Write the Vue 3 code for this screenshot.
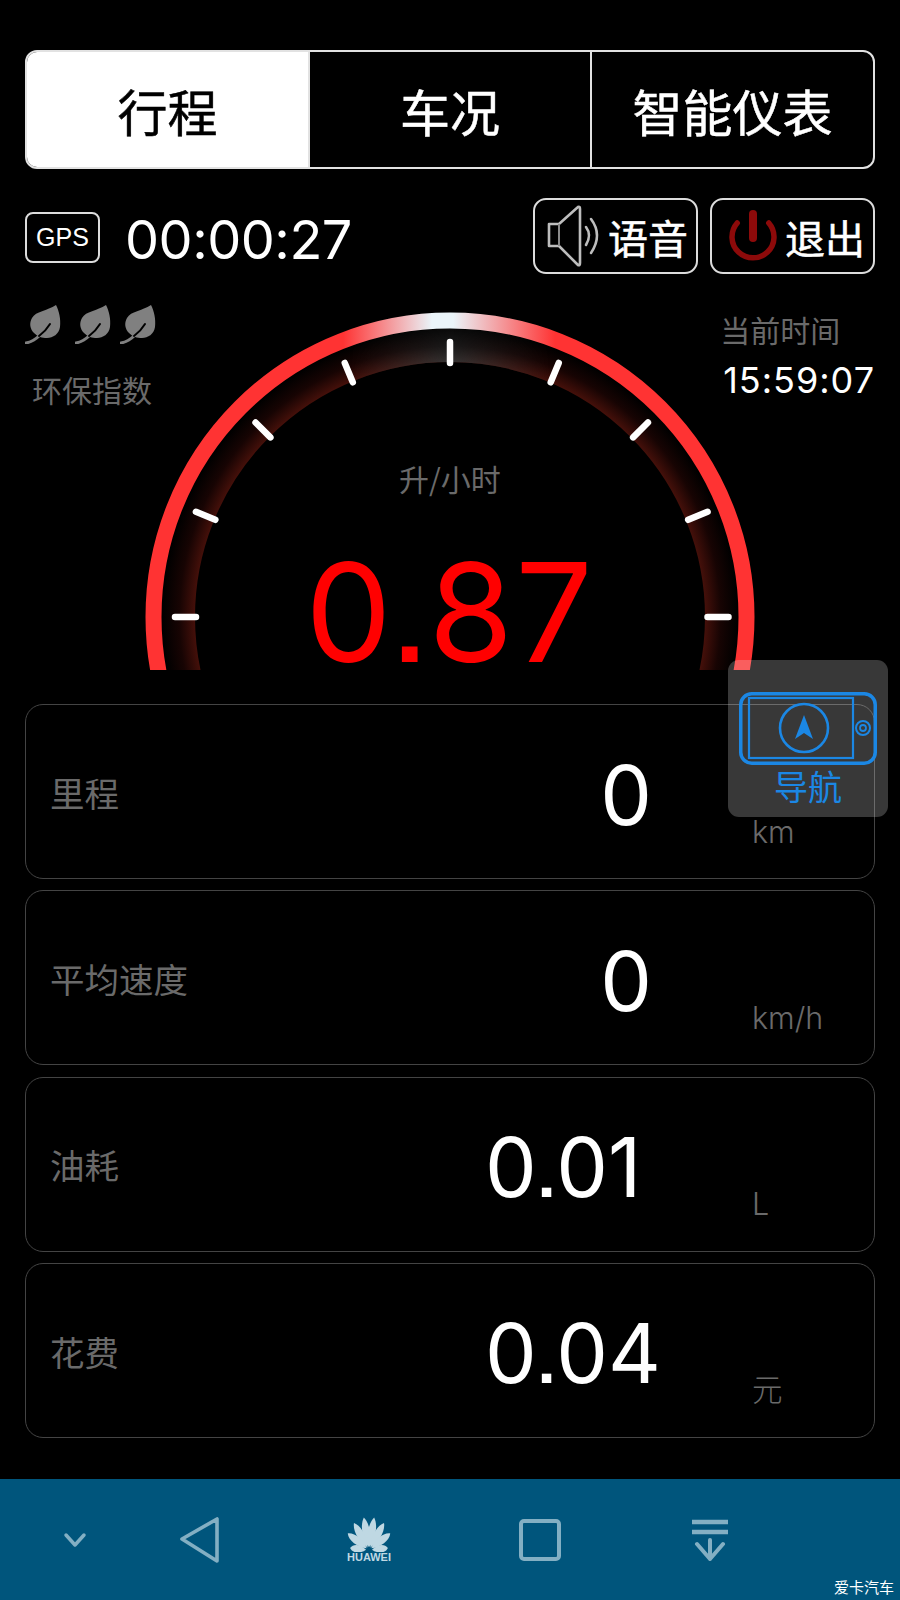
<script setup>
const tabs = [
  { name: '行程', active: true },
  { name: '车况', active: false },
  { name: '智能仪表', active: false }
]
const cx = 450
const cy = 617
const ticks = [0, 22.5, 45, 67.5, 90, 112.5, 135, 157.5, 180].map((deg) => {
  const a = (deg * Math.PI) / 180
  const shift = deg > 90 ? 3.5 : 0
  return {
    x1: cx + shift - 254 * Math.cos(a),
    y1: cy - 254 * Math.sin(a),
    x2: cx + shift - 275 * Math.cos(a),
    y2: cy - 275 * Math.sin(a)
  }
})
const petals = [
  { a: -9, l: 33 }, { a: 9, l: 33 },
  { a: -29, l: 31 }, { a: 29, l: 31 },
  { a: -52, l: 27 }, { a: 52, l: 27 },
  { a: -84, l: 19 }, { a: 84, l: 19 }
]
const rows = [
  { label: '里程', value: '0', unit: 'km' },
  { label: '平均速度', value: '0', unit: 'km/h' },
  { label: '油耗', value: '0.01', unit: 'L' },
  { label: '花费', value: '0.04', unit: '元' }
]
</script>

<template>
  <div class="page">
    <main class="content">
      <nav class="tabs">
        <div v-for="t in tabs" :key="t.name" class="tab" :class="{ active: t.active }">{{ t.name }}</div>
      </nav>

      <section class="status">
        <div class="gps">GPS</div>
        <div class="elapsed">00:00:27</div>
        <div class="actions">
          <div class="action">
            <svg class="ic-speaker" viewBox="0 0 60 64" width="60" height="64">
              <path d="M2 20H12L31 3Q33 2 33 5V59Q33 62 31 61L12 42H2Z" fill="none" stroke="#bdbdbd" stroke-width="2.6" stroke-linejoin="round" />
              <path d="M12 20V42" stroke="#8a8a8a" stroke-width="2" />
              <path d="M39 23Q45 31 39 41" fill="none" stroke="#bdbdbd" stroke-width="2.6" stroke-linecap="round" />
              <path d="M44 15Q56 31 44 49" fill="none" stroke="#bdbdbd" stroke-width="2.6" stroke-linecap="round" />
            </svg>
            <span>语音</span>
          </div>
          <div class="action">
            <svg class="ic-power" viewBox="0 0 50 56" width="50" height="56">
              <path d="M9.200 15A21 21 0 1 0 40.800 15" fill="none" stroke="#8d0a0a" stroke-width="5.500" stroke-linecap="round" />
              <path d="M25 6V30" stroke="#8d0a0a" stroke-width="8" stroke-linecap="round" />
            </svg>
            <span>退出</span>
          </div>
        </div>
      </section>

      <section class="gauge">
        <svg class="dial" viewBox="0 274 900 396" width="900" height="396">
          <defs>
            <linearGradient id="rim" gradientUnits="userSpaceOnUse" x1="343" y1="0" x2="555" y2="0">
              <stop offset="0" stop-color="#ff3333" />
              <stop offset="0.42" stop-color="#eaf4f9" />
              <stop offset="0.52" stop-color="#eaf4f9" />
              <stop offset="1" stop-color="#ff3333" />
            </linearGradient>
            <radialGradient id="bandRed" gradientUnits="userSpaceOnUse" cx="450" cy="617" r="288">
              <stop offset="0.885" stop-color="#45100a" />
              <stop offset="0.94" stop-color="#170403" />
              <stop offset="1" stop-color="#000" />
            </radialGradient>
            <radialGradient id="bandGrey" gradientUnits="userSpaceOnUse" cx="450" cy="617" r="288">
              <stop offset="0.885" stop-color="#333" />
              <stop offset="0.94" stop-color="#1a1a1a" />
              <stop offset="1" stop-color="#0a0a0a" />
            </radialGradient>
            <linearGradient id="topFade" gradientUnits="userSpaceOnUse" x1="350" y1="0" x2="550" y2="0">
              <stop offset="0" stop-color="#000" />
              <stop offset="0.5" stop-color="#fff" />
              <stop offset="1" stop-color="#000" />
            </linearGradient>
            <mask id="topMask" maskUnits="userSpaceOnUse" x="0" y="274" width="900" height="396">
              <rect x="0" y="274" width="900" height="396" fill="url(#topFade)" />
            </mask>
          </defs>
          <circle cx="450" cy="617" r="271.500" fill="none" stroke="url(#bandRed)" stroke-width="33" />
          <circle cx="450" cy="617" r="271.500" fill="none" stroke="url(#bandGrey)" stroke-width="33" mask="url(#topMask)" />
          <circle cx="450" cy="617" r="296.500" fill="none" stroke="url(#rim)" stroke-width="16" />
          <line v-for="(t, i) in ticks" :key="i" :x1="t.x1" :y1="t.y1" :x2="t.x2" :y2="t.y2" stroke="#fff" stroke-width="6.500" stroke-linecap="round" />
        </svg>

        <div class="eco">
          <div class="leaves">
            <svg v-for="n in 3" :key="n" class="leaf" viewBox="0 0 36 39" width="36" height="39">
              <path d="M31 0C34 6 36 14 35 22C34 29 28 33 22 33C17 33 13 32 9 28C5 24 4 18 7 13C11 6 22 6 31 0Z" fill="#808080" />
              <path d="M1 38C6 37 10 35 14 31" fill="none" stroke="#808080" stroke-width="3" stroke-linecap="round" />
              <path d="M14 31C18 28 22 24 25 19" fill="none" stroke="#000" stroke-width="2" stroke-linecap="round" />
            </svg>
          </div>
          <div class="muted-label eco-label">环保指数</div>
        </div>

        <div class="reading">
          <div class="muted-label reading-unit">升/小时</div>
          <div class="reading-value">0.87</div>
        </div>

        <div class="clock">
          <div class="muted-label">当前时间</div>
          <div class="clock-time">15:59:07</div>
        </div>
      </section>

      <section class="cards">
        <div v-for="r in rows" :key="r.label" class="card">
          <div class="card-label">{{ r.label }}</div>
          <div class="card-value" :class="{ single: r.value.length === 1 }">{{ r.value }}</div>
          <div class="card-unit">{{ r.unit }}</div>
        </div>
      </section>
    </main>

    <footer class="navbar">
      <svg class="nav-chevron" viewBox="0 0 24 16" width="24" height="16">
        <path d="M3 3L12 13L21 3" fill="none" stroke="#83afc3" stroke-width="3.500" stroke-linecap="round" stroke-linejoin="round" />
      </svg>
      <svg class="nav-back" viewBox="0 0 40 46" width="40" height="46">
        <path d="M37 2V44L2 22Z" fill="none" stroke="#83afc3" stroke-width="3.600" stroke-linejoin="round" />
      </svg>
      <div class="huawei">
        <svg viewBox="-23 -34 46 36" width="46" height="36">
          <path v-for="p in petals" :key="p.a" :transform="`rotate(${p.a}) translate(0 -3)`" :d="`M0 0C-5 -${p.l * 0.3} -5 -${p.l * 0.7} 0 -${p.l - 3}C5 -${p.l * 0.7} 5 -${p.l * 0.3} 0 0Z`" fill="#bfd8e3" />
        </svg>
        <span>HUAWEI</span>
      </div>
      <svg class="nav-home" viewBox="0 0 44 44" width="44" height="44">
        <rect x="3" y="3" width="38" height="38" rx="3" fill="none" stroke="#83afc3" stroke-width="4" />
      </svg>
      <svg class="nav-down" viewBox="0 0 36 42" width="36" height="42">
        <path d="M0 3H36M0 13H36" stroke="#83afc3" stroke-width="4.500" />
        <path d="M18 21V40M5 25L18 40L31 25" fill="none" stroke="#83afc3" stroke-width="4" stroke-linejoin="round" stroke-linecap="round" />
      </svg>
    </footer>

    <aside class="float-nav">
      <svg class="float-icon" viewBox="0 0 142 76" width="142" height="76">
        <rect x="3.750" y="2.750" width="134.500" height="69.500" rx="11" fill="none" stroke="#1b87e4" stroke-width="3.500" />
        <rect x="12" y="7" width="104" height="60" fill="none" stroke="#1b87e4" stroke-width="2.200" />
        <circle cx="67" cy="37" r="24" fill="none" stroke="#1b87e4" stroke-width="2.600" />
        <path d="M67 24L76 48L67 42L58 48Z" fill="#1b87e4" />
        <circle cx="126" cy="37" r="7" fill="none" stroke="#1b87e4" stroke-width="2" />
        <circle cx="126" cy="37" r="3" fill="none" stroke="#1b87e4" stroke-width="1.800" />
      </svg>
      <div class="float-label">导航</div>
    </aside>

    <div class="watermark">爱卡汽车</div>
  </div>
</template>

<style scoped>
.page {
  position: relative;
  width: 900px;
  height: 1600px;
  overflow: hidden;
  background: #000;
  color: #fff;
  display: flex;
  flex-direction: column;
  font-family: "Noto Sans CJK SC", "Liberation Sans", sans-serif;
}
.content {
  flex: 1;
  padding: 50px 25px 0 25px;
}
.tabs {
  display: grid;
  grid-template-columns: 281px 282px 1fr;
  height: 119px;
  border: 2px solid #e2e2e2;
  border-radius: 12px;
  overflow: hidden;
  box-sizing: border-box;
}
.tab {
  display: flex;
  align-items: center;
  justify-content: center;
  font-size: 50px;
  -webkit-text-stroke: 0.5px currentColor;
  border-left: 2px solid #e2e2e2;
}
.tab:first-child { border-left: 0; }
.tab.active {
  background: #fff;
  color: #000;
}
.status {
  display: flex;
  align-items: center;
  height: 76px;
  margin-top: 29px;
}
.gps {
  width: 75px;
  height: 51px;
  margin-top: 2px;
  box-sizing: border-box;
  border: 2px solid #dcdcdc;
  border-radius: 8px;
  display: flex;
  align-items: center;
  justify-content: center;
  font-family: "Liberation Sans", sans-serif;
  font-size: 25px;
}
.elapsed {
  margin-left: 25px;
  margin-top: 8px;
  font-family: Inter, sans-serif;
  font-size: 54px;
  letter-spacing: -0.500px;
  line-height: 1;
}
.actions {
  margin-left: auto;
  display: flex;
  gap: 12px;
}
.action {
  width: 165px;
  height: 76px;
  box-sizing: border-box;
  border: 2px solid #dcdcdc;
  border-radius: 13px;
  display: flex;
  align-items: center;
  font-size: 40px;
}
.action span {
  line-height: 1;
  margin-top: 2px;
  -webkit-text-stroke: 0.5px currentColor;
}
.ic-speaker { margin: 0 1px 0 12px; }
.ic-power { margin: 0 7px 0 16px; }
.gauge {
  position: relative;
  height: 396px;
  display: flex;
  justify-content: space-between;
  align-items: flex-start;
}
.dial {
  position: absolute;
  left: -25px;
  top: 0;
}
.eco {
  position: relative;
  padding-top: 31px;
}
.leaves { display: flex; }
.leaf:nth-child(2) { margin-left: 14px; }
.leaf:nth-child(3) { margin-left: 9px; }
.muted-label {
  color: #6a6a6a;
  font-size: 30px;
  line-height: 1;
}
.eco-label {
  margin-top: 30px;
  margin-left: 7px;
}
.reading {
  position: absolute;
  left: 0;
  right: 0;
  top: 0;
  display: flex;
  flex-direction: column;
  align-items: center;
}
.reading-unit {
  margin-top: 189px;
}
.reading-value {
  margin-top: 51px;
  color: #ff0000;
  font-family: Inter, sans-serif;
  font-feature-settings: "ss07";
  font-size: 137px;
  letter-spacing: 2px;
  line-height: 1;
}
.clock {
  position: relative;
  padding-top: 40px;
  text-align: right;
}
.clock .muted-label {
  text-align: left;
  margin-left: -3px;
}
.clock-time {
  margin-top: 18px;
  font-family: Inter, sans-serif;
  font-size: 36px;
  letter-spacing: 1px;
  line-height: 1;
}
.cards {
  margin-top: 34px;
  display: grid;
  grid-auto-rows: 175px;
  row-gap: 11.330px;
}
.card {
  box-sizing: border-box;
  border: 1px solid #444;
  border-radius: 18px;
  padding-left: 24px;
  display: grid;
  grid-template-columns: 1fr 167px 222px;
  align-items: center;
}
.card-label {
  color: #6a6a6a;
  font-size: 34.500px;
  line-height: 1;
  margin-top: 1px;
}
.card-value {
  margin-top: 8px;
  font-family: Inter, sans-serif;
  font-feature-settings: "ss07";
  font-size: 82px;
  line-height: 1;
  white-space: nowrap;
}
.card-value.single { text-align: right; }
.card-unit {
  align-self: end;
  margin-bottom: 31px;
  margin-left: 100px;
  color: #6a6a6a;
  font-family: Inter, "Noto Sans CJK SC", sans-serif;
  font-size: 30.500px;
  font-weight: 300;
  line-height: 1;
}
.navbar {
  height: 121px;
  background: #00557c;
  display: flex;
  align-items: center;
  padding-left: 63px;
}
.nav-back { margin-left: 93px; }
.huawei {
  margin-left: 126px;
  display: flex;
  flex-direction: column;
  align-items: center;
  color: #bfd8e3;
  font-family: "Liberation Sans", sans-serif;
  font-size: 11px;
  font-weight: 700;
  line-height: 1;
}
.nav-home { margin-left: 126px; }
.nav-down { margin-left: 130px; }
.float-nav {
  position: absolute;
  left: 728px;
  top: 660px;
  width: 160px;
  height: 157px;
  background: rgba(233, 233, 233, 0.24);
  border-radius: 11px;
  display: flex;
  flex-direction: column;
  align-items: center;
}
.float-icon {
  margin-top: 31px;
}
.float-label {
  color: #1b87e4;
  font-size: 34px;
  line-height: 1.100;
}
.watermark {
  position: absolute;
  right: 6px;
  bottom: 6px;
  font-size: 15px;
  line-height: 1;
  color: #fff;
}
</style>
